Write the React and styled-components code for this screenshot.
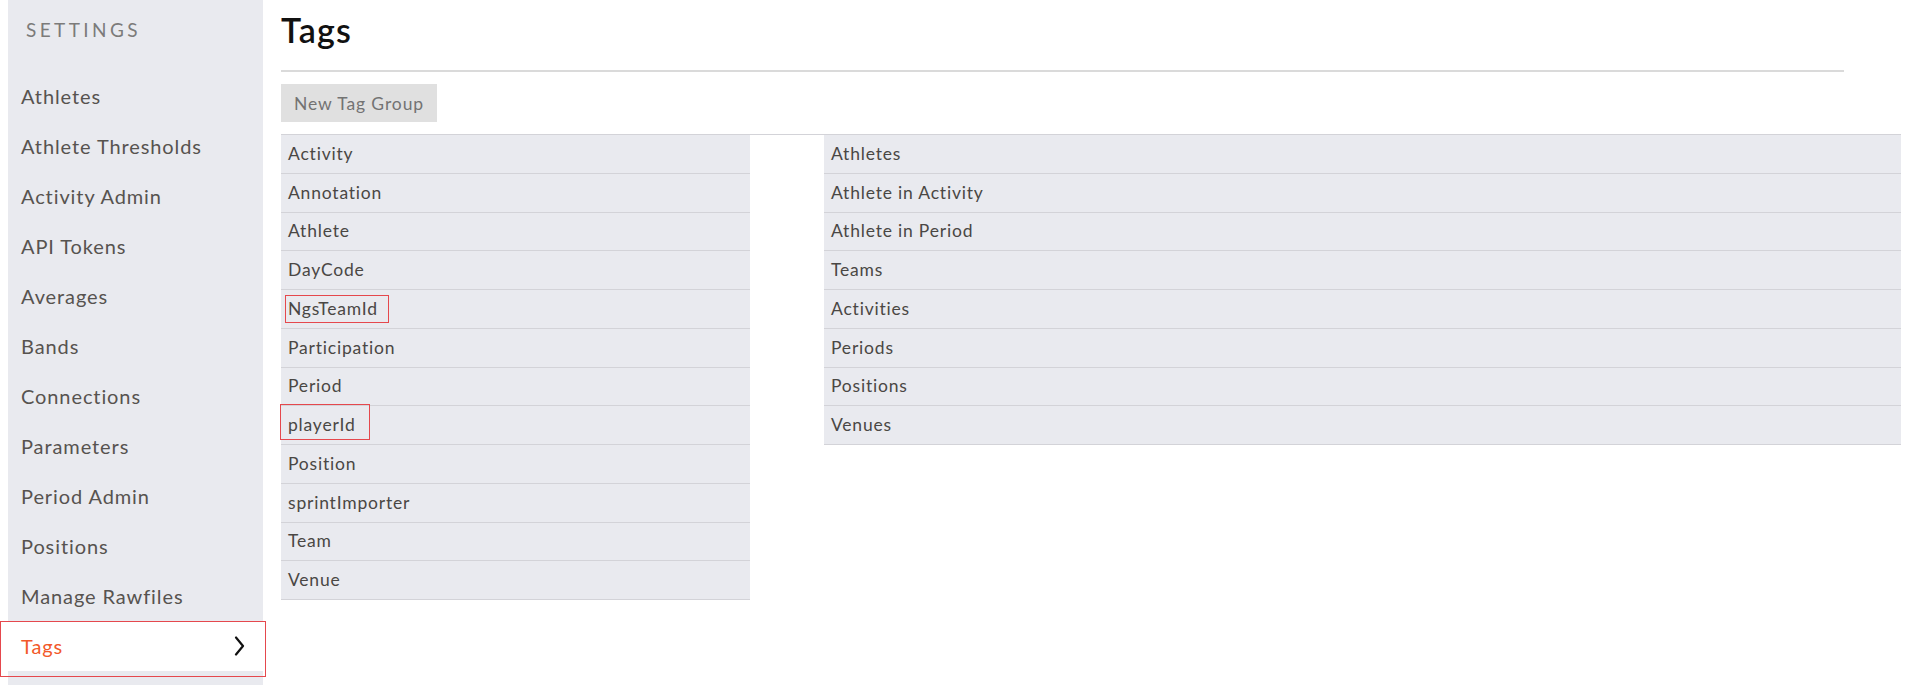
import React from "react";
import styled, { createGlobalStyle } from "styled-components";

const GlobalStyle = createGlobalStyle`
  body {
    margin: 0;
    background: #ffffff;
    font-family: Lato, "Open Sans", sans-serif;
  }
`;

const Page = styled.div`
  display: flex;
  align-items: flex-start;
  height: 685px;
  padding-left: 8px;
  overflow: hidden;
`;

const Sidebar = styled.nav`
  width: 255px;
  flex-shrink: 0;
  min-height: 685px;
  background-color: #e9eaef;
`;

const SidebarHeading = styled.div`
  height: 71px;
  box-sizing: border-box;
  padding: 18px 0 0 18px;
  font-size: 19px;
  letter-spacing: 3.4px;
  color: #7c7b7a;
  text-transform: uppercase;
`;

const NavItem = styled.div`
  position: relative;
  display: flex;
  align-items: center;
  justify-content: space-between;
  height: 50px;
  padding: 0 18px 0 13px;
  font-size: 20px;
  letter-spacing: 0.9px;
  color: ${(p) => (p.active ? "#f2592a" : "#57534f")};
  background-color: ${(p) => (p.active ? "#ffffff" : "transparent")};
`;

const Annotation = styled.div`
  position: absolute;
  top: ${(p) => p.top}px;
  left: ${(p) => p.left}px;
  width: ${(p) => p.w}px;
  height: ${(p) => p.h}px;
  box-sizing: border-box;
  border: 1px solid #e5484d;
  pointer-events: none;
`;

const Main = styled.main`
  flex: 1;
  margin-left: 18px;
`;

const Title = styled.h1`
  margin: 0;
  height: 70px;
  box-sizing: border-box;
  padding-top: 9px;
  font-size: 34px;
  font-weight: 600;
  letter-spacing: 1.2px;
  color: #111111;
`;

const Divider = styled.hr`
  margin: 0;
  width: 1563px;
  border: none;
  border-top: 2px solid #dadada;
`;

const Button = styled.button`
  display: block;
  margin-top: 12px;
  width: 156px;
  height: 38px;
  padding: 0;
  border: none;
  background-color: #e0e0e0;
  font-family: inherit;
  font-size: 17.5px;
  letter-spacing: 0.9px;
  color: #737373;
`;

const Tables = styled.div`
  display: flex;
  gap: 74px;
  width: 1620px;
  margin-top: 12px;
  border-top: 1px solid #d3d3d8;
`;

const List = styled.div`
  width: ${(p) => (p.wide ? "auto" : "469px")};
  flex: ${(p) => (p.wide ? 1 : "none")};
`;

const Row = styled.div`
  position: relative;
  display: flex;
  align-items: center;
  height: 38.75px;
  box-sizing: border-box;
  padding: 0 0 1px 7px;
  border-bottom: 1px solid #d3d3d8;
  background-color: #e9eaef;
  font-size: 17.5px;
  letter-spacing: 0.8px;
  color: #4a4744;
`;

const Chevron = () => (
  <svg width="11" height="20" viewBox="0 0 11 20" fill="none">
    <path d="M2 1.5 L9 10 L2 18.5" stroke="#111" strokeWidth="2.2" strokeLinecap="round" strokeLinejoin="round" />
  </svg>
);

const navItems = [
  "Athletes",
  "Athlete Thresholds",
  "Activity Admin",
  "API Tokens",
  "Averages",
  "Bands",
  "Connections",
  "Parameters",
  "Period Admin",
  "Positions",
  "Manage Rawfiles",
  "Tags",
];

const tagGroups = [
  { name: "Activity" },
  { name: "Annotation" },
  { name: "Athlete" },
  { name: "DayCode" },
  { name: "NgsTeamId", mark: { top: 5, left: 4, w: 104, h: 28 } },
  { name: "Participation" },
  { name: "Period" },
  { name: "playerId", mark: { top: -2, left: -1, w: 90, h: 36 } },
  { name: "Position" },
  { name: "sprintImporter" },
  { name: "Team" },
  { name: "Venue" },
];

const entities = [
  "Athletes",
  "Athlete in Activity",
  "Athlete in Period",
  "Teams",
  "Activities",
  "Periods",
  "Positions",
  "Venues",
];

const App = () => {
  return (
    <>
      <GlobalStyle />
      <Page>
        <Sidebar>
          <SidebarHeading>Settings</SidebarHeading>
          {navItems.map((item) => {
            const active = item === "Tags";
            return (
              <NavItem key={item} active={active}>
                <span>{item}</span>
                {active && <Chevron />}
                {active && <Annotation top={0} left={-8} w={266} h={56} />}
              </NavItem>
            );
          })}
        </Sidebar>
        <Main>
          <Title>Tags</Title>
          <Divider />
          <Button>New Tag Group</Button>
          <Tables>
            <List>
              {tagGroups.map((group) => (
                <Row key={group.name}>
                  {group.name}
                  {group.mark && <Annotation {...group.mark} />}
                </Row>
              ))}
            </List>
            <List wide>
              {entities.map((entity) => (
                <Row key={entity}>{entity}</Row>
              ))}
            </List>
          </Tables>
        </Main>
      </Page>
    </>
  );
};

export default App;
